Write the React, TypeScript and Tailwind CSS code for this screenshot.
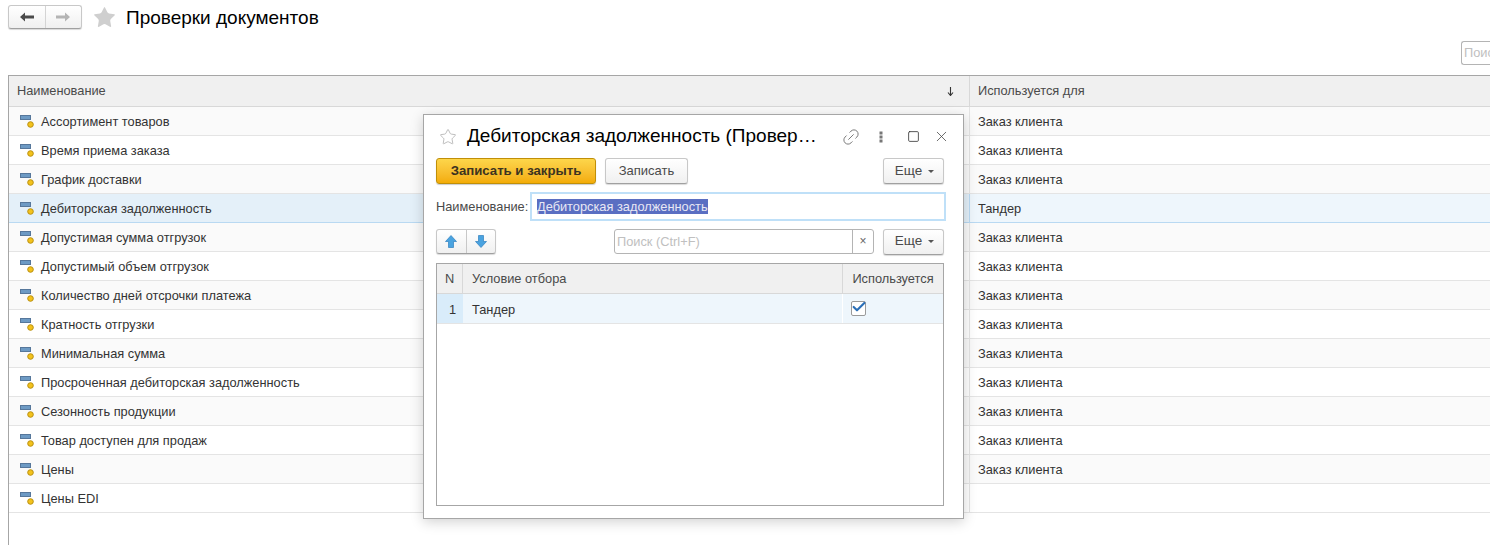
import { Link2, X, Square, Star, Check } from "lucide-react";

const rows = [
  ["Ассортимент товаров", "Заказ клиента"],
  ["Время приема заказа", "Заказ клиента"],
  ["График доставки", "Заказ клиента"],
  ["Дебиторская задолженность", "Тандер"],
  ["Допустимая сумма отгрузок", "Заказ клиента"],
  ["Допустимый объем отгрузок", "Заказ клиента"],
  ["Количество дней отсрочки платежа", "Заказ клиента"],
  ["Кратность отгрузки", "Заказ клиента"],
  ["Минимальная сумма", "Заказ клиента"],
  ["Просроченная дебиторская задолженность", "Заказ клиента"],
  ["Сезонность продукции", "Заказ клиента"],
  ["Товар доступен для продаж", "Заказ клиента"],
  ["Цены", "Заказ клиента"],
  ["Цены EDI", ""],
];

// Small "setting" icon in front of each row
function RowIcon() {
  return (
    <svg width="14" height="13" viewBox="0 0 14 13" className="mt-[1px] shrink-0">
      <rect x="0.5" y="0.5" width="10" height="4" fill="#6d9ac4" stroke="#56779b" strokeWidth="1" />
      <circle cx="10.5" cy="9.5" r="2.8" fill="#f3c21c" stroke="#b98f10" strokeWidth="1" />
    </svg>
  );
}

function MoreButton() {
  return (
    <button className="flex h-[26px] w-[61px] items-center justify-center gap-1 rounded-[3px] border border-[#c8c8c8] border-b-[#a0a0a0] bg-gradient-to-b from-white to-[#f0f0f0] pl-[2px] text-[13.5px] text-[#4a4a4a] shadow-[0_1px_1px_rgba(0,0,0,0.15)]">
      Еще
      <span className="ml-0.5 h-0 w-0 border-x-[3px] border-t-[3px] border-x-transparent border-t-[#555]" />
    </button>
  );
}

function ArrowLeft({ color }: { color: string }) {
  return (
    <svg width="14" height="10" viewBox="0 0 14 10">
      <path d="M0 5 L5 0.5 V3.5 H14 V6.5 H5 V9.5 Z" fill={color} />
    </svg>
  );
}

function ArrowVert({ up }: { up?: boolean }) {
  return (
    <svg width="12" height="13" viewBox="0 0 12 13" className={up ? "" : "rotate-180"}>
      <path d="M6 0.5 L11.5 6.5 H8.5 V12.5 H3.5 V6.5 H0.5 Z" fill="#4aa3e0" stroke="#2f7fbe" strokeWidth="0.7" />
    </svg>
  );
}

function Dialog() {
  return (
    <div className="absolute left-[423px] top-[114px] flex h-[405px] w-[541px] flex-col border border-[#a6a6a6] bg-white pl-3 pr-[19px] shadow-[0_3px_12px_rgba(0,0,0,0.18)]">
      {/* Title bar */}
      <div className="flex h-[43px] items-center">
        <Star size={18} strokeWidth={1} className="ml-[3px] shrink-0 text-[#a8a8a8]" />
        <span className="mb-[2px] ml-[10px] shrink-0 text-[19px] leading-[40px] text-black">Дебиторская задолженность (Провер…</span>
        <Link2 size={20} strokeWidth={1.1} className="ml-auto shrink-0 -rotate-45 text-[#777]" />
        <svg width="4" height="12" viewBox="0 0 4 12" className="ml-[18px] shrink-0">
          <rect x="0.5" y="0.5" width="3" height="3" fill="#777" />
          <rect x="0.5" y="4.5" width="3" height="3" fill="#777" />
          <rect x="0.5" y="8.5" width="3" height="3" fill="#777" />
        </svg>
        <Square size={13} strokeWidth={1.5} className="ml-[24px] shrink-0 text-[#333]" />
        <X size={17} strokeWidth={1.1} className="-mr-[6px] ml-[13px] shrink-0 text-[#444]" />
      </div>

      {/* Command bar */}
      <div className="flex h-[26px] items-center">
        <button className="h-[26px] w-[160px] rounded-[3px] border border-[#c08f08] bg-gradient-to-b from-[#fdd64a] to-[#f3ac04] text-[13.2px] font-bold text-[#3c3320] shadow-[0_1px_1px_rgba(0,0,0,0.2)]">
          Записать и закрыть
        </button>
        <button className="ml-[9px] h-[26px] w-[83px] rounded-[3px] border border-[#c8c8c8] border-b-[#a0a0a0] bg-gradient-to-b from-white to-[#f0f0f0] text-[13px] text-[#4a4a4a] shadow-[0_1px_1px_rgba(0,0,0,0.15)]">
          Записать
        </button>
        <div className="ml-auto">
          <MoreButton />
        </div>
      </div>

      {/* Name field */}
      <div className="mt-2 flex h-[29px] items-center">
        <span className="w-[94px] text-[12.8px] text-[#4a4a4a]">Наименование:</span>
        <div className="-mr-[2px] flex h-[29px] flex-1 items-center border-2 border-[#bfe0f8] bg-white pl-[5px]">
          <span className="bg-[#5a6ec2] text-[12.8px] leading-[15px] text-[#e8e8f4]">Дебиторская задолженность</span>
        </div>
      </div>

      {/* Table toolbar */}
      <div className="mt-2 flex h-[25px] items-center">
        <div className="flex h-[25px] w-[60px] rounded-[3px] border border-[#c8c8c8] border-b-[#a0a0a0] bg-gradient-to-b from-white to-[#f0f0f0] shadow-[0_1px_1px_rgba(0,0,0,0.15)]">
          <div className="flex flex-1 items-center justify-center border-r border-[#c8c8c8]">
            <ArrowVert up />
          </div>
          <div className="flex flex-1 items-center justify-center">
            <ArrowVert />
          </div>
        </div>
        <div className="ml-[118px] flex h-[25px] w-[260px] rounded-[3px] border border-[#b4b4b4] bg-white">
          <span className="flex-1 pl-[2px] text-[12.8px] leading-[23px] text-[#c0c0c0]">Поиск (Ctrl+F)</span>
          <span className="w-[21px] border-l border-[#b4b4b4] text-center text-xs leading-[22px] text-[#666]">×</span>
        </div>
        <div className="ml-auto">
          <MoreButton />
        </div>
      </div>

      {/* Inner table */}
      <div className="mt-[9px] h-[243px] border border-[#a6a6a6]">
        <div className="flex h-[30px] border-b border-[#d8d8d8] bg-[#f0f0f0] text-[12.8px] leading-[29px] text-[#4a4a4a]">
          <div className="w-[26px] border-r border-[#d8d8d8] text-center">N</div>
          <div className="w-[380px] border-r border-[#d8d8d8] pl-[9px]">Условие отбора</div>
          <div className="flex-1 text-center">Используется</div>
        </div>
        <div className="flex h-[30px] border-b border-[#e4e4e4] bg-[#eef6fc] text-[12.8px] leading-[31px] text-[#333]">
          <div className="w-[26px] bg-[#d9ecfa] pr-[7px] text-right">1</div>
          <div className="w-[380px] border-r border-white pl-[9px]">Тандер</div>
          <div className="flex-1 pl-[8px] pt-[7px]">
            <div className="relative h-[15px] w-[15px] rounded-[2px] border border-[#9a9a9a] bg-white">
              <Check size={16} strokeWidth={3.2} className="absolute -right-[2px] -top-[3px] text-[#2a6fb8]" />
            </div>
          </div>
        </div>
      </div>
    </div>
  );
}

export default function App() {
  return (
    <div className="relative h-[545px] w-[1490px] overflow-hidden bg-white font-['Liberation_Sans',Arial,sans-serif]">
      {/* Header */}
      <div className="flex h-[41px] items-start pl-2 pt-[5px]">
        <div className="flex h-[24px] w-[74px] rounded-[3px] border border-[#c8c8c8] border-b-[#a0a0a0] bg-gradient-to-b from-white to-[#f0f0f0] shadow-[0_1px_1px_rgba(0,0,0,0.15)]">
          <div className="flex flex-1 items-center justify-center border-r border-[#d4d4d4]">
            <ArrowLeft color="#4a4a4a" />
          </div>
          <div className="flex flex-1 items-center justify-center">
            <div className="rotate-180">
              <ArrowLeft color="#b4b4b4" />
            </div>
          </div>
        </div>
        <Star size={25} fill="#cfcfcf" strokeWidth={0} className="ml-[10px] text-[#cfcfcf]" />
        <span className="ml-[9px] text-[19px] leading-[26px] text-black">Проверки документов</span>
      </div>

      {/* Search */}
      <div className="flex h-[34px] justify-end">
        <div className="h-[24px] w-[29px] overflow-hidden whitespace-nowrap rounded-l-[3px] border border-r-0 border-[#b4b4b4] pl-[2px] text-[12.8px] leading-[22px] text-[#c0c0c0]">
          Поис
        </div>
      </div>

      {/* Main list */}
      <div className="ml-2 h-[470px] border-l border-t border-[#a6a6a6]">
        <div className="flex h-[31px] border-b border-[#d8d8d8] bg-[#f0f0f0] text-[12.8px] leading-[30px] text-[#4a4a4a]">
          <div className="flex w-[961px] items-center justify-between border-r border-[#d8d8d8] pl-2 pr-[15px]">
            <span>Наименование</span>
            <svg width="7" height="9" viewBox="0 0 7 9">
              <path d="M3.5 0 V8 M1 5.5 L3.5 8.5 L6 5.5" fill="none" stroke="#333" strokeWidth="1.1" />
            </svg>
          </div>
          <div className="pl-2">Используется для</div>
        </div>
        {rows.map(([name, usedFor], i) => (
          <div
            key={name}
            className={`flex h-[29px] border-b text-[12.8px] leading-[29px] text-[#333] ${
              i === 3 ? "border-[#b9d9f2] bg-[#eef6fc]" : i % 2 === 0 ? "border-[#e4e4e4] bg-[#fafafa]" : "border-[#e4e4e4] bg-white"
            }`}
          >
            <div
              className={`flex w-[961px] items-center gap-[7px] border-r pl-[11px] ${
                i === 3 ? "border-[#b9d9f2] bg-[#e4f0f9]" : "border-[#e4e4e4]"
              }`}
            >
              <RowIcon />
              <span>{name}</span>
            </div>
            <div className="pl-2">{usedFor}</div>
          </div>
        ))}
      </div>

      <Dialog />
    </div>
  );
}
